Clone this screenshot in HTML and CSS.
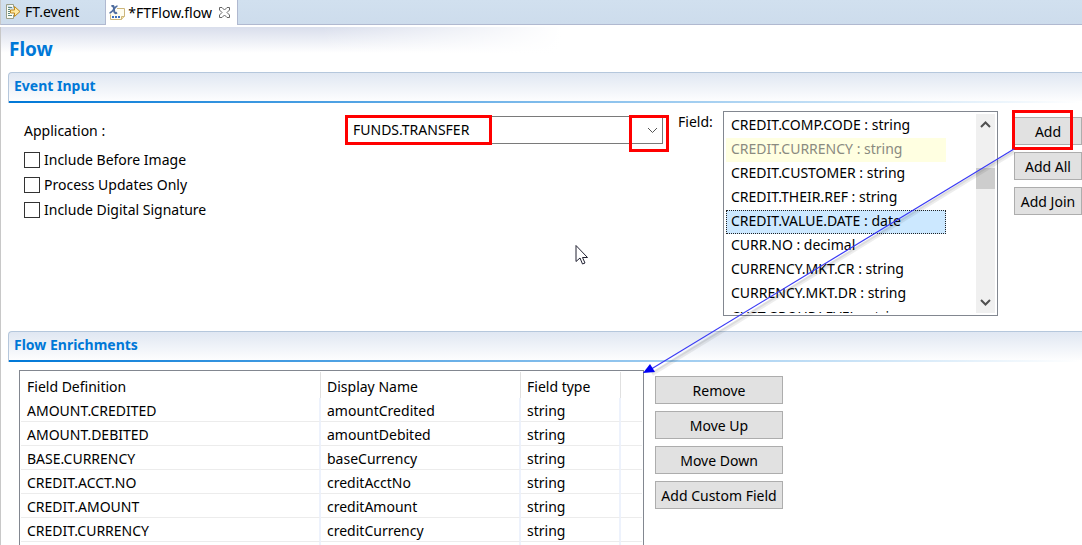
FILE: index.html
```html
<!DOCTYPE html>
<html lang="en">
<head>
<meta charset="utf-8">
<title>FTFlow.flow</title>
<link rel="stylesheet" href="styles.css">
</head>
<body>
<nav class="tabs">
  <button class="tab" type="button">
    <svg class="tab-icon" width="16" height="16" viewBox="0 0 16 16" aria-hidden="true">
      <path d="M1.500.5h7v3M8.500 11v3.500h-7V.5" fill="#fdfdf4" stroke="#9a9f88"/>
      <path d="M3 3.500h4M3 5.500h2M3 7.500h2M3 9.500h2M3 11.500h4" stroke="#5f8a82"/>
      <path d="M5.500 6h4V2.500l5.500 5-5.500 5V9h-4z" fill="#ffe9a0" stroke="#c08a1e"/>
    </svg>
    FT.event
  </button>
  <button class="tab tab-active" type="button">
    <svg class="tab-icon" width="16" height="16" viewBox="0 0 16 16" aria-hidden="true">
      <path d="M8 3.500h7.500v8l-3 3H1.500v-5" fill="#fffdf0" stroke="#cdb67c"/>
      <path d="M12.500 14.500v-3h3" fill="#f3dfa0" stroke="#cdb67c"/>
      <path d="M2.500 1.500c2-1.500 2.500 0 2.500 3s1 4.500 3 3" fill="none" stroke="#4f6d9e" stroke-width="2"/>
      <path d="M8.500 1C6 1 4 7.500.5 8" fill="none" stroke="#4f6d9e" stroke-width="1.500"/>
      <path d="M3 12h2M6 12h2M9 12h2" stroke="#3c6fc0" stroke-width="2"/>
    </svg>
    *FTFlow.flow
    <svg class="tab-close" width="11" height="11" viewBox="0 0 11 11" aria-hidden="true">
      <path d="M.5.5h2.500l2.500 2.500L8 .5h2.500V3L8 5.500 10.500 8v2.500H8L5.500 8 3 10.500H.5V8L3 5.500.5 3z" fill="#fff" stroke="#666"/>
    </svg>
  </button>
</nav>

<main class="form">
  <h1 class="form-title">Flow</h1>

  <section class="section">
    <h2 class="section-title">Event Input</h2>
    <div class="event-input">
      <div class="options">
        <label class="application-label" for="application">Application :</label>
        <label class="check"><input type="checkbox">Include Before Image</label>
        <label class="check"><input type="checkbox">Process Updates Only</label>
        <label class="check"><input type="checkbox">Include Digital Signature</label>
      </div>
      <div class="combo">
        <select id="application" class="combo-select"><option>FUNDS.TRANSFER</option></select>
        <svg class="combo-arrow" width="11" height="7" viewBox="0 0 11 7" aria-hidden="true"><path d="M1 1l4.500 4.500L10 1" fill="none" stroke="#555"/></svg>
        <span class="mark mark-value"></span>
        <span class="mark mark-arrow"></span>
      </div>
      <label class="field-label" for="field">Field:</label>
      <div class="list">
        <select id="field" class="list-select" size="8">
          <option>CREDIT.COMP.CODE : string</option>
          <option class="used">CREDIT.CURRENCY : string</option>
          <option>CREDIT.CUSTOMER : string</option>
          <option>CREDIT.THEIR.REF : string</option>
          <option selected>CREDIT.VALUE.DATE : date</option>
          <option>CURR.NO : decimal</option>
          <option>CURRENCY.MKT.CR : string</option>
          <option>CURRENCY.MKT.DR : string</option>
          <option>CUST.GROUP.LEVEL : string</option>
        </select>
        <div class="scrollbar" aria-hidden="true">
          <svg width="11" height="7" viewBox="0 0 11 7"><path d="M1 6l4.500-4.500L10 6" fill="none" stroke="#505050" stroke-width="2"/></svg>
          <span class="thumb"></span>
          <svg width="11" height="7" viewBox="0 0 11 7"><path d="M1 1l4.500 4.500L10 1" fill="none" stroke="#505050" stroke-width="2"/></svg>
        </div>
      </div>
      <div class="actions add-actions">
        <button class="button" type="button">Add</button>
        <button class="button" type="button">Add All</button>
        <button class="button" type="button">Add Join</button>
        <span class="mark mark-add"></span>
      </div>
    </div>
  </section>

  <section class="section">
    <h2 class="section-title">Flow Enrichments</h2>
    <div class="enrichments">
      <div class="table-frame">
        <table class="table">
          <colgroup><col class="col-definition"><col class="col-name"><col class="col-type"><col></colgroup>
          <thead><tr><th>Field Definition</th><th>Display Name</th><th>Field type</th><th></th></tr></thead>
          <tbody>
            <tr><td>AMOUNT.CREDITED</td><td>amountCredited</td><td>string</td><td></td></tr>
            <tr><td>AMOUNT.DEBITED</td><td>amountDebited</td><td>string</td><td></td></tr>
            <tr><td>BASE.CURRENCY</td><td>baseCurrency</td><td>string</td><td></td></tr>
            <tr><td>CREDIT.ACCT.NO</td><td>creditAcctNo</td><td>string</td><td></td></tr>
            <tr><td>CREDIT.AMOUNT</td><td>creditAmount</td><td>string</td><td></td></tr>
            <tr><td>CREDIT.CURRENCY</td><td>creditCurrency</td><td>string</td><td></td></tr>
            <tr><td></td><td></td><td></td><td></td></tr>
          </tbody>
        </table>
      </div>
      <div class="actions table-actions">
        <button class="button" type="button">Remove</button>
        <button class="button" type="button">Move Up</button>
        <button class="button" type="button">Move Down</button>
        <button class="button" type="button">Add Custom Field</button>
      </div>
    </div>
  </section>
</main>

<svg class="overlay" width="1082" height="545" viewBox="0 0 1082 545" aria-hidden="true">
  <path d="M1014 152L652 374" stroke="#000" stroke-opacity=".07" stroke-width="4"/>
  <path d="M1014 151L652 373" stroke="#000" stroke-opacity=".07" stroke-width="2"/>
  <path d="M1014 149L648 371" stroke="#3a3af5" stroke-width="1.200"/>
  <path d="M643 373l7-9 5 8z" fill="#0000f5"/>
  <path d="M576 245.500v16l4-3.500 2.500 6 2.500-1-2.500-5.500h5z" fill="#fff" stroke="#223"/>
</svg>
</body>
</html>
```

FILE: styles.css
```css
* {
  box-sizing: border-box;
}

body {
  position: relative;
  display: flex;
  flex-direction: column;
  height: 100vh;
  margin: 0;
  overflow: hidden;
  background: #fff;
  color: #000;
  font: 14px/24px "Noto Sans", "Open Sans", sans-serif;
}

button,
select,
input {
  font: inherit;
  color: inherit;
}

.tabs {
  display: flex;
  flex: none;
  height: 25px;
  border-bottom: 1px solid #b0b9d0;
  border-left: 1px solid #c8c8c8;
  background: linear-gradient(#d1e0ef, #cddcec);
}

.tab {
  display: flex;
  align-items: center;
  gap: 4px;
  height: 24px;
  padding: 0 26px 0 4px;
  border: 0;
  background: none;
  white-space: nowrap;
}

.tab-active {
  gap: 3px;
  height: 25px;
  padding: 0 7px 0 3px;
  border: solid #b0b9d0;
  border-width: 0 1px;
  background: #fff;
}

.tab-icon {
  flex: none;
}

.tab-close {
  flex: none;
  margin-left: 4px;
}

.form {
  flex: 1;
  min-height: 0;
  margin-top: 2px;
  padding-left: 7px;
  border-left: 1px solid #c8c8c8;
  background:
    linear-gradient(90deg, transparent 320px, #fff 560px) 0 0 / 100% 26px no-repeat,
    linear-gradient(#d9deec, #fff) 0 0 / 100% 26px no-repeat;
}

.form-title {
  margin: 0;
  padding: 10px 0 11px 1px;
  color: #0078d7;
  font-size: 19px;
  line-height: 24px;
}

.section-title {
  height: 31px;
  margin: 0;
  padding: 1px 5px;
  border: solid #b5c7dc;
  border-width: 1px 0 0 1px;
  border-top-left-radius: 4px;
  background:
    linear-gradient(90deg, #0078d7, #fff) 0 100% / 100% 2px no-repeat,
    linear-gradient(#e0e7f2, #fff);
  color: #0078d7;
  font-size: 14px;
  line-height: 24px;
}

.event-input {
  display: flex;
  align-items: flex-start;
  height: 228px;
  padding-top: 8px;
}

.options {
  display: flex;
  flex-direction: column;
  width: 338px;
  padding: 8px 0 0 16px;
}

.application-label {
  height: 28px;
}

.check {
  display: flex;
  align-items: center;
  gap: 4px;
  height: 25px;
}

.check input {
  appearance: none;
  width: 16px;
  height: 16px;
  margin: 0;
  border: 1px solid #333;
  background: #fff;
}

.combo {
  position: relative;
  flex: 1;
  margin: 5px 15px 0 0;
}

.combo-select {
  display: block;
  appearance: none;
  width: 100%;
  height: 28px;
  padding: 0 6px;
  border: 1px solid #7a7a7a;
  border-radius: 0;
  background: #fff;
}

.combo-arrow {
  position: absolute;
  top: 11px;
  right: 5px;
}

.mark {
  position: absolute;
  border: 3px solid #f00;
  pointer-events: none;
}

.mark-value {
  top: -1px;
  left: -1px;
  width: 147px;
  height: 30px;
}

.mark-arrow {
  top: -1px;
  right: -6px;
  width: 40px;
  height: 37px;
}

.field-label {
  width: 45px;
  line-height: 22px;
}

.list {
  display: flex;
  width: 275px;
  height: 205px;
  padding: 2px;
  border: 1px solid #828790;
}

.list-select {
  flex: 1;
  height: 199px;
  padding: 0;
  border: 0;
  border-radius: 0;
  outline: 0;
  background: #fff;
  overflow: hidden;
  scrollbar-width: none;
}

.list-select option {
  width: 220px;
  height: 24px;
  padding: 1px 5px;
  line-height: 22px;
}

.list-select .used {
  background: #ffffe1;
  color: #8a8a80;
}

.list-select option:checked {
  border: 1px dotted #222;
  padding: 0 4px;
  background-image: linear-gradient(#cce8ff, #cce8ff);
  color: #000;
}

.scrollbar {
  display: flex;
  flex-direction: column;
  align-items: center;
  width: 19px;
  padding: 7px 0;
  background: #f0f0f0;
}

.thumb {
  width: 19px;
  height: 21px;
  margin: 40px 0 auto;
  background: #cdcdcd;
}

.actions {
  position: relative;
  display: flex;
  flex-direction: column;
  gap: 7px;
}

.button {
  height: 28px;
  padding: 1px 0 0;
  border: 1px solid #adadad;
  border-radius: 0;
  background: #e1e1e1;
  white-space: nowrap;
}

.add-actions {
  width: 68px;
  margin: 6px 0 0 16px;
}

.mark-add {
  top: -7px;
  left: -2px;
  width: 61px;
  height: 40px;
}

.enrichments {
  display: flex;
  align-items: flex-start;
  gap: 11px;
  padding: 8px 0 0 11px;
}

.table-frame {
  width: 625px;
  padding: 1px;
  border: 1px solid #828790;
}

.table {
  width: 100%;
  border-collapse: separate;
  border-spacing: 0;
  table-layout: fixed;
}

.col-definition {
  width: 300px;
}

.col-name {
  width: 200px;
}

.col-type {
  width: 100px;
}

.table th,
.table td {
  height: 24px;
  padding: 2px 6px 0;
  border-right: 2px solid #edf2fc;
  border-bottom: 1px solid #ececec;
  font-weight: 400;
  line-height: 21px;
  text-align: left;
}

.table th {
  height: 26px;
  border-right: 1px solid #e0e0e0;
  border-bottom: 0;
}

.table th:last-child,
.table td:last-child {
  border-right: 0;
}

.table-actions {
  width: 128px;
  padding-top: 6px;
}

.overlay {
  position: absolute;
  top: 0;
  left: 0;
  pointer-events: none;
}
```
